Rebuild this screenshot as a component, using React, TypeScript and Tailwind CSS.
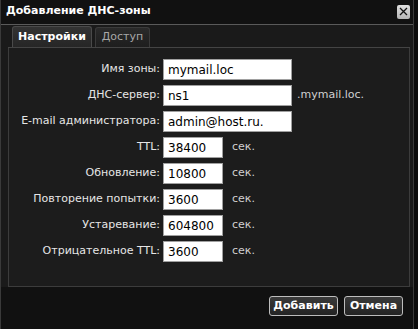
import React from "react";

type Row = {
  label: string;
  value: string;
  wide?: boolean;
  suffix?: string;
};

const rows: Row[] = [
  { label: "Имя зоны:", value: "mymail.loc", wide: true },
  { label: "ДНС-сервер:", value: "ns1", wide: true, suffix: ".mymail.loc." },
  { label: "E-mail администратора:", value: "admin@host.ru.", wide: true },
  { label: "TTL:", value: "38400", suffix: "сек." },
  { label: "Обновление:", value: "10800", suffix: "сек." },
  { label: "Повторение попытки:", value: "3600", suffix: "сек." },
  { label: "Устаревание:", value: "604800", suffix: "сек." },
  { label: "Отрицательное TTL:", value: "3600", suffix: "сек." },
];

function CloseButton() {
  return (
    <button className="w-[13px] h-[14px] rounded-[2px] bg-gradient-to-b from-[#e0e0e0] to-[#b5b5b5] flex items-center justify-center">
      <svg width="9" height="9" viewBox="0 0 9 9">
        <path d="M1 1 L8 8 M8 1 L1 8" stroke="#111" strokeWidth="1.3" />
      </svg>
    </button>
  );
}

function FormRow({ row }: { row: Row }) {
  return (
    <div className="flex items-center h-[21px]">
      <div className="w-[154px] text-right pr-[3px] text-[#e6e6e6]">{row.label}</div>
      <input
        readOnly
        value={row.value}
        className={
          "h-[21px] bg-white text-black border border-[#a0a0a0] pl-[4px] outline-none text-[12px] " +
          (row.wide ? "w-[129px]" : "w-[60px]")
        }
        style={{ fontFamily: "inherit" }}
      />
      {row.suffix && (
        <span className={"text-[#d0d0d0] " + (row.wide ? "ml-[5px]" : "ml-[9px]")}>{row.suffix}</span>
      )}
    </div>
  );
}

export default function App() {
  return (
    <div
      className="w-[418px] h-[329px] bg-[#0c0c0c] text-[11px] overflow-hidden"
      style={{ fontFamily: '"DejaVu Sans", Verdana, sans-serif' }}
    >
      <div className="w-[414px] h-[329px] bg-[#111] border-x border-[#3a3a3a] flex flex-col">
        {/* title bar */}
        <div className="h-[25px] flex items-center justify-between pl-[5px] pr-[3px] border-b border-[#5a5a5a]">
          <span className="text-white font-bold text-[11px] -mt-[2px]">Добавление ДНС-зоны</span>
          <div className="-mt-[1px]">
            <CloseButton />
          </div>
        </div>

        <div className="bg-[#1a1a1a] flex flex-col">
          {/* tabs */}
          <div className="flex items-end gap-[3px] pl-[4px] pt-[2px] h-[23px] border-b border-[#444] mr-[3px] ml-[7px]">
            <div className="w-[80px] h-[21px] rounded-t-[3px] bg-gradient-to-b from-[#333] to-[#262626] border border-b-0 border-[#4a4a4a] text-white font-bold flex items-center justify-center">
              Настройки
            </div>
            <div className="w-[55px] h-[20px] rounded-t-[3px] bg-gradient-to-b from-[#2a2a2a] to-[#1e1e1e] border border-b-0 border-[#3a3a3a] text-[#a8a8a8] flex items-center justify-center">
              Доступ
            </div>
          </div>

          {/* panel */}
          <div className="ml-[7px] mr-[3px] h-[239px] bg-[#1c1c1c] border border-t-0 border-[#3c3c3c] pt-[11px] flex flex-col gap-[5px]">
            {rows.map((r) => (
              <FormRow key={r.label} row={r} />
            ))}
          </div>
        </div>

        {/* buttons */}
        <div className="flex justify-end gap-[6px] pr-[10px] pt-[9px]">
          <button className="w-[69px] h-[20px] rounded-[3px] border border-[#bdbdbd] bg-gradient-to-b from-[#3a3a3a] to-[#242424] text-white font-bold">
            Добавить
          </button>
          <button className="w-[59px] h-[20px] rounded-[3px] border border-[#bdbdbd] bg-gradient-to-b from-[#3a3a3a] to-[#242424] text-white font-bold">
            Отмена
          </button>
        </div>
      </div>
    </div>
  );
}
